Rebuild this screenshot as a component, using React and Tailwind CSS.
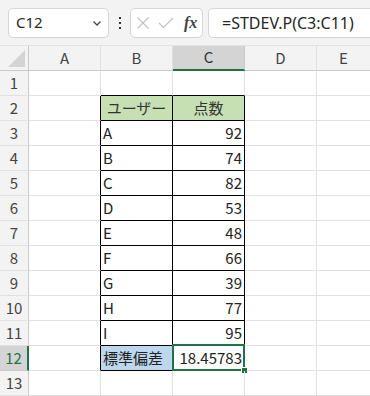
import React from 'react';

const CELL_FONT = { fontFamily: '"Noto Sans CJK JP", "Noto Sans", sans-serif' };

const users = [
  ['A', 92],
  ['B', 74],
  ['C', 82],
  ['D', 53],
  ['E', 48],
  ['F', 66],
  ['G', 39],
  ['H', 77],
  ['I', 95],
];

const FormulaBar = () => (
  <div className="h-[46px] bg-[#f3f3f3] border-b border-[#e3e3e3] flex items-center pl-2 gap-0">
    <div className="w-[101px] h-[30px] bg-white border border-[#d6d6d6] rounded-[5px] flex items-center justify-between pl-[7px] pr-[6px]">
      <span className="text-[15px] text-[#262626]" style={{ fontFamily: '"Noto Sans", sans-serif' }}>C12</span>
      <svg width="10" height="8" viewBox="0 0 10 8" fill="none" stroke="#444" strokeWidth="1.3">
        <path d="M1.5 2.5 L5 6 L8.5 2.5" />
      </svg>
    </div>
    <div className="w-[21px] flex flex-col items-center gap-[3px]">
      <span className="w-[2px] h-[2px] bg-[#333]" />
      <span className="w-[2px] h-[2px] bg-[#333]" />
      <span className="w-[2px] h-[2px] bg-[#333]" />
    </div>
    <div className="w-[73px] h-[30px] bg-white border border-[#d6d6d6] rounded-[5px] flex items-center pl-[5px] gap-[8px]">
      <svg width="14" height="14" viewBox="0 0 14 14" stroke="#c2c2c2" strokeWidth="1.2">
        <path d="M1.5 1.5 L12.5 12.5 M12.5 1.5 L1.5 12.5" />
      </svg>
      <svg width="16" height="12" viewBox="0 0 16 12" fill="none" stroke="#c2c2c2" strokeWidth="1.2">
        <path d="M1 6 L5.5 10.5 L15 1" />
      </svg>
      <span className="text-[16px] italic font-bold text-[#444] leading-none ml-[2px]" style={{ fontFamily: '"Liberation Serif", serif' }}>fx</span>
    </div>
    <div className="flex-1 h-[30px] ml-[5px] bg-white border border-r-0 border-[#d6d6d6] rounded-l-[5px] flex items-center pl-[13px]">
      <span className="text-[16px] text-[#262626]" style={{ fontFamily: '"Noto Sans", sans-serif' }}>=STDEV.P(C3:C11)</span>
    </div>
  </div>
);

const HeaderRow = () => (
  <div className="flex h-[25px]" style={CELL_FONT}>
    <div className="w-[29px] border-r border-b border-[#c9c9c9] bg-[#f3f3f3] relative">
      <svg className="absolute left-[8px] top-[4px]" width="17" height="17" viewBox="0 0 17 17">
        <path d="M17 0 L17 17 L0 17 Z" fill="#d4d4d4" />
      </svg>
    </div>
    {['A', 'B', 'C', 'D'].map((c) => (
      <div
        key={c}
        className={
          c === 'C'
            ? 'w-[72px] bg-[#d4d4d4] border-r border-[#c9c9c9] border-b-2 border-b-[#217346] flex items-center justify-center text-[15px] text-[#333]'
            : 'w-[72px] bg-[#f3f3f3] border-r border-b border-[#e0e0e0] border-b-[#c9c9c9] flex items-center justify-center text-[15px] text-[#444]'
        }
      >
        {c}
      </div>
    ))}
    <div className="flex-1 bg-[#f3f3f3] border-b border-[#c9c9c9] flex items-center justify-center text-[15px] text-[#444]">
      E
    </div>
  </div>
);

const Row = ({ n }) => {
  const inTable = n >= 2 && n <= 12;
  const user = n >= 3 && n <= 11 ? users[n - 3] : null;
  const selected = n === 12;

  let bText = '';
  let cText = '';
  let bClass = 'w-[72px] border-r border-b border-[#e1e1e1] text-[15px] text-[#222] flex items-center';
  let cClass = 'w-[72px] border-r border-b border-[#e1e1e1] text-[15px] text-[#222] flex items-center relative';

  if (n === 1) {
    bClass = 'w-[72px] border-r border-b border-[#e1e1e1] border-b-black';
    cClass = 'w-[72px] border-r border-b border-[#e1e1e1] border-b-black';
  }
  if (n === 2) {
    bText = 'ユーザー';
    cText = '点数';
    bClass = 'w-[72px] border-r border-b border-black bg-[#c6e0b4] text-[15px] text-[#333] flex items-center justify-center whitespace-nowrap';
    cClass = 'w-[72px] border-r border-b border-black bg-[#c6e0b4] text-[15px] text-[#333] flex items-center justify-center whitespace-nowrap';
  }
  if (user) {
    bText = user[0];
    cText = user[1];
    bClass = 'w-[72px] border-r border-b border-black text-[15px] text-[#222] flex items-center pl-[2px]';
    cClass = 'w-[72px] border-r border-b border-black text-[15px] text-[#222] flex items-center justify-end pr-[2px]';
  }
  if (selected) {
    bText = '標準偏差';
    cText = '18.45783';
    bClass = 'w-[72px] border-r border-b border-black bg-[#bdd7ee] text-[15px] text-[#222] flex items-center pl-[2px] whitespace-nowrap';
    cClass = 'w-[72px] border-r border-b border-black text-[15px] text-[#222] flex items-center justify-end pr-[2px] relative';
  }

  return (
    <div className="flex h-[25px]" style={CELL_FONT}>
      <div
        className={
          selected
            ? 'w-[29px] bg-[#d4d4d4] border-r-2 border-r-[#217346] border-b border-b-[#c9c9c9] flex items-center justify-center text-[15px] text-[#217346]'
            : 'w-[29px] bg-[#f3f3f3] border-r border-b border-[#c9c9c9] border-b-[#e0e0e0] flex items-center justify-center text-[15px] text-[#444]'
        }
      >
        {n}
      </div>
      <div className={`w-[72px] border-r border-b border-[#e1e1e1] ${inTable ? 'border-r-black' : ''}`} />
      <div className={bClass}>{bText}</div>
      <div className={cClass}>
        {cText}
        {selected && (
          <>
            <div className="absolute -left-[1px] -top-[2px] w-[73px] h-[27px] border-2 border-[#217346]" />
            <div className="absolute -right-[4px] -bottom-[4px] w-[7px] h-[7px] bg-[#217346] border border-white" />
          </>
        )}
      </div>
      <div className="w-[72px] border-r border-b border-[#e1e1e1]" />
      <div className="flex-1 border-b border-[#e1e1e1]" />
    </div>
  );
};

export default function App() {
  return (
    <div className="w-[370px] h-[396px] bg-white overflow-hidden">
      <FormulaBar />
      <HeaderRow />
      {Array.from({ length: 13 }, (_, i) => (
        <Row key={i + 1} n={i + 1} />
      ))}
    </div>
  );
}
